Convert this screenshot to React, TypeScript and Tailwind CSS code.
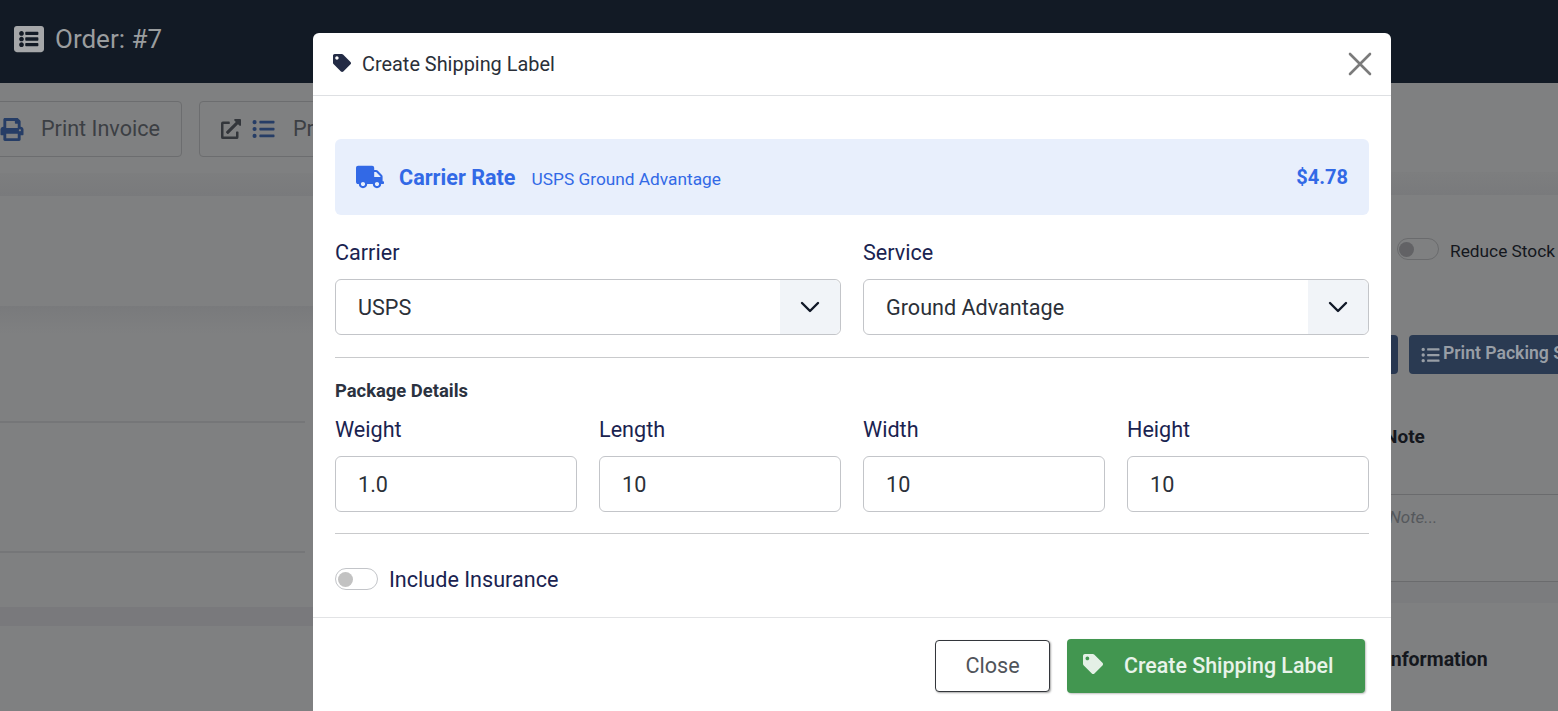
import { FaListAlt, FaPrint, FaExternalLinkAlt, FaListUl, FaTag, FaTruck } from 'react-icons/fa';

function ChevronBox() {
  return (
    <div className="w-[60px] self-stretch flex items-center justify-center bg-[#f1f4f8] rounded-r-[6px]">
      <svg width="20" height="12" viewBox="0 0 20 12" fill="none" stroke="#111827" strokeWidth="2.4" strokeLinecap="round" strokeLinejoin="round">
        <path d="M2 2l8 8 8-8" />
      </svg>
    </div>
  );
}

function SelectField({ label, value }: { label: string; value: string }) {
  return (
    <div className="flex-1">
      <div className="h-[26px] leading-[26px] text-[21.6px] text-[#1a2350] mb-[13px]">{label}</div>
      <div className="h-[56px] flex items-center justify-between border border-[#c3c5c9] rounded-[6px] pl-[22px] text-[21.6px] text-[#2b3038]">
        <span className="mt-[2px]">{value}</span>
        <ChevronBox />
      </div>
    </div>
  );
}

function NumberField({ label, value }: { label: string; value: string }) {
  return (
    <div className="flex-1">
      <div className="h-[26px] leading-[26px] text-[21.6px] text-[#1a2350] mb-[13px]">{label}</div>
      <div className="h-[56px] flex items-center border border-[#c3c5c9] rounded-[6px] pl-[22px] text-[21.6px] text-[#2b3038]">
        <span className="mt-[2px]">{value}</span>
      </div>
    </div>
  );
}

function Toggle({ dim }: { dim?: boolean }) {
  return (
    <div className={dim
      ? 'w-[42px] h-[22px] rounded-full border border-[#6a6b6d] flex items-center pl-[1px]'
      : 'w-[43px] h-[22px] rounded-full border border-[#c3c5c9] flex items-center pl-[2px]'}>
      <div className={dim ? 'w-[15px] h-[15px] rounded-full bg-[#626265]' : 'w-[15px] h-[15px] rounded-full bg-[#c2c2c2]'} />
    </div>
  );
}

function PageBehind() {
  return (
    <div className="flex-1 flex bg-[#7f8081] overflow-hidden">
      <div className="w-[1385px] shrink-0">
        <div className="h-[56px] mt-[18px] flex gap-[17px] -ml-[20px]">
          <div className="w-[202px] border border-[#6c6d6f] rounded-[4px] flex items-center pl-[19px] gap-[17px] text-[21.6px] text-[#3c3f44]">
            <FaPrint className="w-[24px] h-[23px] text-[#263d66]" />
            <span>Print Invoice</span>
          </div>
          <div className="w-[300px] border border-[#6c6d6f] rounded-[4px] flex items-center pl-[21px] gap-[11px] text-[21.6px] text-[#3c3f44]">
            <FaExternalLinkAlt className="w-[20px] h-[20px] text-[#33363b]" />
            <FaListUl className="w-[23px] h-[22px] text-[#263d66]" />
            <span className="ml-[7px]">Print Packing</span>
          </div>
        </div>
        <div className="mt-[16px] h-[23px] bg-gradient-to-b from-[#7d7e7f] to-[#797a7c]" />
        <div className="mt-[110px] h-[28px] bg-gradient-to-b from-[#797a7c] to-[#7f8081]" />
        <div className="mt-[87px] mr-[1080px] border-b-2 border-[#757678]" />
        <div className="mt-[128px] mr-[1080px] border-b-2 border-[#757678]" />
        <div className="mt-[54px] h-[19px] bg-[#79797c]" />
      </div>
      <div className="flex-1 min-w-0 whitespace-nowrap">
        <div className="mt-[89px] h-[23px] bg-gradient-to-b from-[#7d7e7f] to-[#797a7c]" />
        <div className="mt-[43px] flex items-center h-[22px] pl-[12px] gap-[11px] text-[17.3px] text-[#14171d]">
          <Toggle dim />
          <span className="mt-[5px]">Reduce Stock</span>
        </div>
        <div className="mt-[75px] flex h-[39px] gap-[11px]">
          <div className="w-[13px] shrink-0 bg-[#283750] rounded-r-[4px]" />
          <div className="w-[200px] shrink-0 bg-[#2a3a52] rounded-[4px] flex items-center pl-[12px] pb-[3px] gap-[3px] text-[17.6px] font-semibold text-[#989ea6]">
            <FaListUl className="w-[19px] h-[18px] shrink-0 mt-[3px]" />
            <span>Print Packing Slip</span>
          </div>
        </div>
        <div className="mt-[49px] h-[27px] -ml-[1px] text-[19px] leading-[27px] font-bold text-[#14171d]">Note</div>
        <div className="mt-[44px] border-t border-[#6a6b6d] h-[87px] pt-[10px] text-[17px] italic text-[#55585c]">
          <span className="ml-[4px]">Note...</span>
        </div>
        <div className="border-t border-[#6a6b6d] h-[22px] bg-[#7b7c7e]" />
        <div className="mt-[43px] h-[27px] text-[19.5px] leading-[27px] font-bold text-[#14171d]">Information</div>
      </div>
    </div>
  );
}

export default function App() {
  return (
    <div className="relative w-[1558px] h-[711px] overflow-hidden flex flex-col font-['Roboto',sans-serif]">
      <div className="h-[83px] shrink-0 bg-[#121a25] flex items-center pl-[14px] pb-[5px] gap-[11px] text-[26px] text-[#9a9d9f]">
        <FaListAlt className="w-[30px] h-[30px] text-[#a5a7a9]" />
        <span>Order: #7</span>
      </div>
      <PageBehind />

      {/* modal */}
      <div className="absolute top-[33px] left-[313px] w-[1078px] h-[690px] bg-white rounded-t-[6px] flex flex-col">
        <div className="h-[63px] shrink-0 border-b border-[#dee0e3] flex items-center justify-between pl-[20px] pr-[19px]">
          <div className="flex items-center gap-[11px] text-[19.9px] text-[#2a2f38]">
            <FaTag className="w-[18px] h-[18px] text-[#232b45] -mt-[2px]" />
            <span className="mt-[1px]">Create Shipping Label</span>
          </div>
          <svg width="24" height="24" viewBox="0 0 24 24" fill="none" stroke="#7b7b7b" strokeWidth="2.6" strokeLinecap="round">
            <path d="M2 2l20 20M22 2L2 22" />
          </svg>
        </div>

        <div className="px-[22px] pt-[43px] h-[521px] shrink-0">
          <div className="h-[76px] bg-[#e8effc] rounded-[6px] flex items-center pl-[21px] pr-[21px] text-[#3269e6]">
            <FaTruck className="w-[28px] h-[24px]" />
            <span className="ml-[15px] text-[21.6px] font-bold mt-[2px]">Carrier Rate</span>
            <span className="ml-[16px] text-[17.3px] mt-[5px]">USPS Ground Advantage</span>
            <span className="ml-auto text-[20px] font-bold">$4.78</span>
          </div>

          <div className="flex gap-[22px] mt-[25px]">
            <SelectField label="Carrier" value="USPS" />
            <SelectField label="Service" value="Ground Advantage" />
          </div>

          <div className="mt-[22px] border-t border-[#c9cacc]" />

          <div className="mt-[22px] h-[22px] leading-[22px] text-[18.4px] font-bold text-[#2b3240]">Package Details</div>

          <div className="flex gap-[22px] mt-[15px]">
            <NumberField label="Weight" value="1.0" />
            <NumberField label="Length" value="10" />
            <NumberField label="Width" value="10" />
            <NumberField label="Height" value="10" />
          </div>

          <div className="mt-[21px] border-t border-[#c9cacc]" />

          <div className="mt-[34px] flex items-center gap-[11px] h-[22px] text-[21.6px] text-[#1a2350]">
            <Toggle />
            <span className="mt-[2px]">Include Insurance</span>
          </div>
        </div>

        <div className="border-t border-[#e2e3e5] flex items-start justify-end gap-[17px] pt-[21px] pr-[26px]">
          <button className="mt-[1px] w-[115px] h-[52px] bg-white border border-[#33363b] rounded-[4px] shadow-[1px_1px_2px_rgba(0,0,0,0.35)] text-[21.6px] text-[#50545a]">
            Close
          </button>
          <button className="w-[298px] h-[54px] bg-[#429650] rounded-[4px] shadow-[1px_1px_2px_rgba(0,0,0,0.25)] flex items-center pl-[16px] gap-[21px] text-[21.4px] font-medium text-[#e8f3ea]">
            <FaTag className="w-[20px] h-[20px] -mt-[4px] text-[#e4f0e6]" />
            <span>Create Shipping Label</span>
          </button>
        </div>
      </div>
    </div>
  );
}
